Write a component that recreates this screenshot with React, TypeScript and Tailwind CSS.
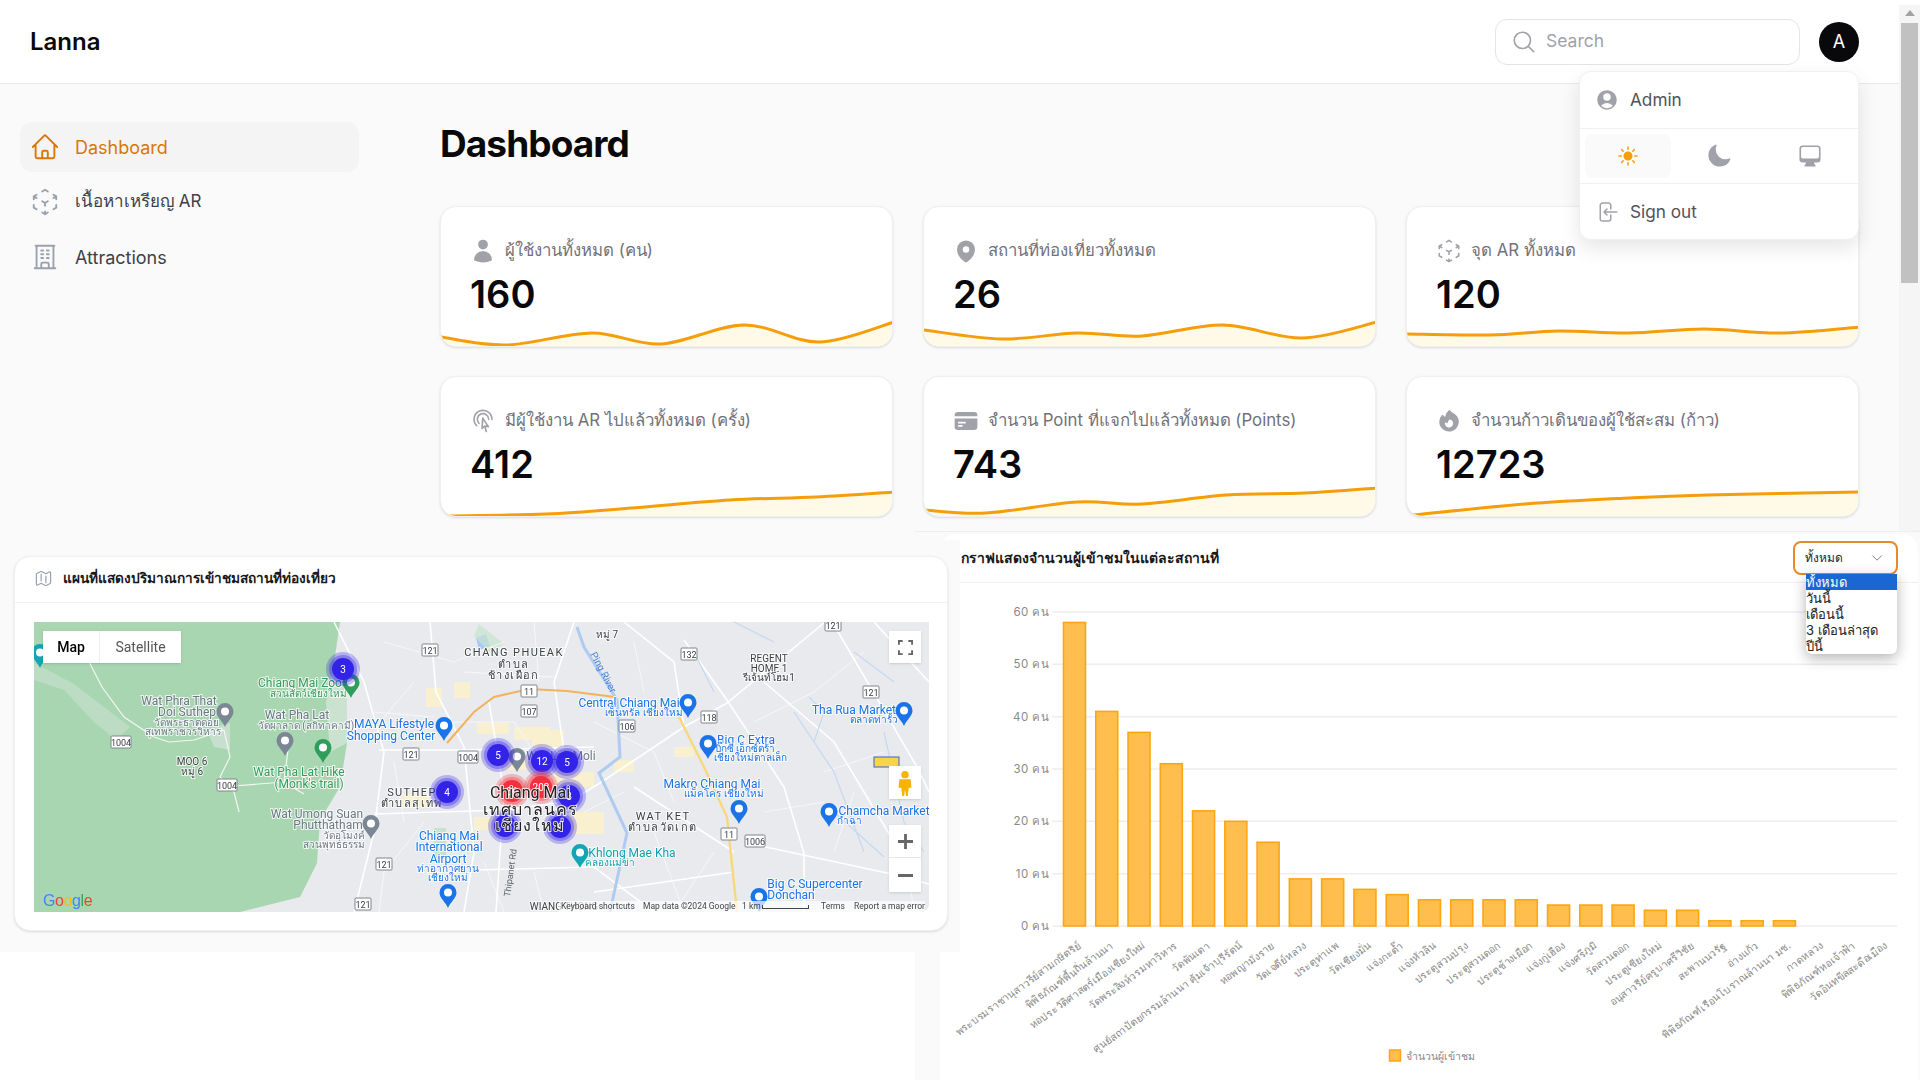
import type { ComponentType } from 'react';
import {
  HiComputerDesktop,
  HiCreditCard,
  HiFire,
  HiMapPin,
  HiMoon,
  HiOutlineArrowLeftOnRectangle,
  HiOutlineBuildingOffice,
  HiOutlineChevronDown,
  HiOutlineCubeTransparent,
  HiOutlineCursorArrowRipple,
  HiOutlineHome,
  HiOutlineMagnifyingGlass,
  HiOutlineMap,
  HiSun,
  HiUser,
  HiUserCircle,
} from 'react-icons/hi2';

type Pt = [number, number];

function smooth(pts: Pt[]) {
  let d = `M${pts[0][0]} ${pts[0][1]}`;
  for (let i = 0; i < pts.length - 1; i++) {
    const p0 = pts[Math.max(i - 1, 0)];
    const p1 = pts[i];
    const p2 = pts[i + 1];
    const p3 = pts[Math.min(i + 2, pts.length - 1)];
    const c1x = p1[0] + (p2[0] - p0[0]) / 6;
    const c1y = p1[1] + (p2[1] - p0[1]) / 6;
    const c2x = p2[0] - (p3[0] - p1[0]) / 6;
    const c2y = p2[1] - (p3[1] - p1[1]) / 6;
    d += `C${c1x} ${c1y} ${c2x} ${c2y} ${p2[0]} ${p2[1]}`;
  }
  return d;
}

const stats: { icon: ComponentType<{ className?: string }>; label: string; value: string; line: Pt[] }[] = [
  { icon: HiUser, label: 'ผู้ใช้งานทั้งหมด (คน)', value: '160', line: [[0, 130], [65, 138], [151, 126], [220, 137], [303, 118], [378, 135], [453, 115]] },
  { icon: HiMapPin, label: 'สถานที่ท่องเที่ยวทั้งหมด', value: '26', line: [[0, 123], [78, 132], [153, 126], [218, 129], [299, 118], [378, 131], [453, 115]] },
  { icon: HiOutlineCubeTransparent, label: 'จุด AR ทั้งหมด', value: '120', line: [[0, 127], [83, 128], [151, 124], [222, 126], [297, 122], [372, 126], [453, 120]] },
  { icon: HiOutlineCursorArrowRipple, label: 'มีผู้ใช้งาน AR ไปแล้วทั้งหมด (ครั้ง)', value: '412', line: [[7, 139], [105, 137], [191, 131], [289, 123], [375, 120], [453, 115]] },
  { icon: HiCreditCard, label: 'จำนวน Point ที่แจกไปแล้วทั้งหมด (Points)', value: '743', line: [[0, 133], [62, 136], [153, 125], [218, 127], [302, 118], [381, 116], [453, 111]] },
  { icon: HiFire, label: 'จำนวนก้าวเดินของผู้ใช้สะสม (ก้าว)', value: '12723', line: [[6, 138], [118, 127], [222, 121], [300, 118], [453, 115]] },
];

const places: [string, number][] = [
  ['พระบรมราชานุสาวรีย์สามกษัตริย์', 58],
  ['พิพิธภัณฑ์พื้นถิ่นล้านนา', 41],
  ['หอประวัติศาสตร์เมืองเชียงใหม่', 37],
  ['วัดพระสิงห์วรมหาวิหาร', 31],
  ['วัดพันเตา', 22],
  ['ศูนย์สถาปัตยกรรมล้านนา คุ้มเจ้าบุรีรัตน์', 20],
  ['หอพญามังราย', 16],
  ['วัดเจดีย์หลวง', 9],
  ['ประตูท่าแพ', 9],
  ['วัดเชียงมั่น', 7],
  ['แจ่งกะต๊ำ', 6],
  ['แจ่งหัวลิน', 5],
  ['ประตูสวนปรุง', 5],
  ['ประตูสวนดอก', 5],
  ['ประตูช้างเผือก', 5],
  ['แจ่งกู่เฮือง', 4],
  ['แจ่งศรีภูมิ', 4],
  ['วัดสวนดอก', 4],
  ['ประตูเชียงใหม่', 3],
  ['อนุสาวรีย์ครูบาศรีวิชัย', 3],
  ['สะพานนวรัฐ', 1],
  ['อ่างแก้ว', 1],
  ['พิพิธภัณฑ์เรือนโบราณล้านนา มช.', 1],
  ['กาดหลวง', 0],
  ['พิพิธภัณฑ์หอเจ้าฟ้า', 0],
  ['วัดอินทขีลสะดือเมือง', 0],
];

// map labels: text, x, y, colour key
const mapLabels: [string, number, number, 'gray' | 'green' | 'blue' | 'dark' | 'teal', number?][] = [
  ['Wat Phra That', 145, 83, 'gray'],
  ['Doi Suthep', 153, 94, 'gray'],
  ['วัดพระธาตุดอย', 152, 104, 'gray', 10],
  ['สุเทพราชวรวิหาร', 149, 113, 'gray', 10],
  ['MOO 6', 158, 143, 'dark', 10],
  ['หมู่ 6', 158, 153, 'dark', 10],
  ['Chiang Mai Zoo', 266, 65, 'green'],
  ['สวนสัตว์เชียงใหม่', 274, 75, 'green', 10],
  ['Wat Pha Lat', 263, 97, 'gray'],
  ['วัดผาลาด (สกิทาคามี)', 272, 107, 'gray', 10],
  ['Wat Pha Lat Hike', 265, 154, 'green'],
  ["(Monk's trail)", 275, 166, 'green'],
  ['Wat Umong Suan', 283, 196, 'gray'],
  ['Phutthatham', 294, 207, 'gray'],
  ['วัดอุโมงค์', 310, 217, 'gray', 10],
  ['สวนพุทธธรรม', 300, 226, 'gray', 10],
  ['MAYA Lifestyle', 360, 106, 'blue'],
  ['Shopping Center', 357, 118, 'blue'],
  ['SUTHEP', 378, 174, 'dark', 11],
  ['ตำบลสุเทพ', 378, 185, 'dark', 11],
  ['Chiang Mai', 415, 218, 'blue'],
  ['International', 415, 229, 'blue'],
  ['Airport', 414, 241, 'blue'],
  ['ท่าอากาศยาน', 414, 250, 'blue', 10],
  ['เชียงใหม่', 414, 259, 'blue', 10],
  ['CHANG PHUEAK', 480, 34, 'dark', 11],
  ['ตำบล', 480, 46, 'dark', 11],
  ['ช้างเผือก', 480, 57, 'dark', 11],
  ['หมู่ 7', 573, 16, 'dark', 10],
  ['REGENT', 735, 40, 'dark', 10],
  ['HOME 1', 735, 50, 'dark', 10],
  ['รีเจ้นท์โฮม1', 735, 59, 'dark', 10],
  ['Central Chiang Mai', 595, 85, 'blue'],
  ['เซ็นทรัล เชียงใหม่', 610, 94, 'blue', 10],
  ['Tha Rua Market', 820, 92, 'blue'],
  ['ตลาดท่ารั้ว', 840, 101, 'blue', 10],
  ['Big C Extra', 712, 122, 'blue'],
  ['บิ๊กซี เอ็กซ์ตร้า', 711, 130, 'blue', 10],
  ['เชียงใหม่ตาลเล็ก', 716, 139, 'blue', 10],
  ['Makro Chiang Mai', 678, 166, 'blue'],
  ['แม็คโคร เชียงใหม่', 690, 175, 'blue', 10],
  ['Chamcha Market', 850, 193, 'blue'],
  ['กำฉา', 815, 202, 'blue', 10],
  ['WAT KET', 629, 198, 'dark', 11],
  ['ตำบลวัดเกต', 629, 209, 'dark', 11],
  ['Wat Lok Moli', 527, 138, 'gray'],
  ['Khlong Mae Kha', 598, 235, 'teal'],
  ['คลองแม่ข่า', 576, 244, 'teal', 10],
  ['Big C Supercenter', 781, 266, 'blue'],
  ['Donchan', 757, 277, 'blue'],
  ['WIANG THONG', 530, 288, 'dark', 10],
];

const labelFill = {
  gray: 'fill-[#6b7785]',
  green: 'fill-[#2f9e5b]',
  blue: 'fill-[#1a73e8]',
  dark: 'fill-[#3c4043]',
  teal: 'fill-[#129eaf]',
};

const pins: [number, number, string][] = [
  [317, 76, '#2f9e5b'],
  [410, 119, '#1a73e8'],
  [191, 105, '#7b8794'],
  [251, 134, '#7b8794'],
  [289, 141, '#2f9e5b'],
  [337, 217, '#7b8794'],
  [414, 286, '#1a73e8'],
  [6, 46, '#12a5b5'],
  [654, 96, '#1a73e8'],
  [870, 104, '#1a73e8'],
  [674, 137, '#1a73e8'],
  [705, 202, '#1a73e8'],
  [795, 205, '#1a73e8'],
  [546, 246, '#12a5b5'],
  [483, 150, '#7b8794'],
  [725, 290, '#1a73e8'],
];

const shields: [number, number, string][] = [
  [87, 120, '1004'], [193, 163, '1004'], [396, 28, '121'], [377, 132, '121'], [434, 135, '1004'],
  [350, 242, '121'], [329, 282, '121'], [495, 69, '11'], [495, 89, '107'], [655, 32, '132'],
  [799, 3, '121'], [837, 70, '121'], [675, 95, '118'], [593, 104, '106'], [695, 212, '11'], [721, 219, '1006'],
];

const clusters: [number, number, string, boolean?][] = [
  [309, 47, '3'], [413, 170, '4'], [464, 133, '5'], [508, 139, '12'], [533, 140, '5'],
  [535, 174, '8'], [471, 204, '9'], [526, 205, '9'], [478, 169, '36', true], [507, 165, '203', true],
];

const roads = [
  'M543 175L566 161L650 105L693 81L790 1',
  'M650 18L693 78L750 165L770 231L770 290',
  'M803 8L883 145L895 170',
  'M713 221L853 251L895 262',
  'M300 0L330 60L350 130L340 210L320 290',
  'M396 0L402 70L430 125L440 230L430 290',
  'M345 128L430 128L560 125',
  'M340 192L470 188L545 178',
  'M455 80L470 170L462 290',
  'M440 248L560 245L620 290',
  'M590 0L640 40L650 105',
  'M600 165L700 230',
  'M840 0L895 60',
  'M540 0L520 60L530 130',
  'M730 60L800 120L860 220',
  'M560 270L700 250',
];

const sideStreets = [
  'M350 20L420 40L470 20', 'M340 90L400 95', 'M360 140L370 200', 'M390 200L350 250L345 290', 'M430 50L520 55',
  'M500 0L505 60', 'M560 100L620 130L640 180', 'M600 20L610 70', 'M620 210L650 290', 'M680 230L640 290',
  'M720 100L780 70L830 30', 'M790 150L850 130', 'M820 170L800 230', 'M870 220L880 290', 'M730 190L790 180',
  'M450 240L470 290', 'M500 250L510 290', 'M380 60L350 95', 'M415 100L480 100L500 130', 'M550 190L590 170',
];

function MapCanvas() {
  return (
    <svg viewBox="0 0 895 290" className="absolute inset-0 h-full w-full [font-family:Roboto,'Noto_Sans',sans-serif]">
      <rect width="895" height="290" fill="#e8eaed" />
      <path d="M0 0H306L300 41L313 75L313 121L306 165L286 198L283 241L266 275L206 290H0Z" fill="#a8d6b1" />
      <path d="M0 41L40 62L96 105L82 118L60 100L30 68L0 58Z" fill="#bcdcc4" />
      <path d="M173 108L196 101L196 128L180 125Z" fill="#c6e0cd" />
      <path d="M300 41L313 75L313 121L296 130L292 80Z" fill="#cbe2d1" />
      <path d="M443 101H475V112H443ZM480 105H516V118H480ZM470 135H500V148H470ZM520 150H560V165H520ZM440 195H468V208H440ZM535 190H570V212H535ZM368 172H395V186H368ZM392 66H408V85H392ZM420 60H436V76H420ZM498 108H530V125H498ZM580 138H600V150H580ZM640 125H660V135H640Z" fill="#f9f0cf" />
      <path d="M442 16L452 12L456 24L445 28Z" fill="#a8c7fa" />
      <path d="M400 206H412V236H400Z" fill="#c6e4cd" />
      <path d="M445 2L470 22L455 30L440 14Z" fill="#c6e4cd" opacity="0.7" />
      {sideStreets.map((d, i) => (
        <path key={i} d={d} fill="none" stroke="#f6f7f8" strokeWidth="1" />
      ))}
      {roads.map((d, i) => (
        <path key={i} d={d} fill="none" stroke="#ffffff" strokeWidth="1.6" />
      ))}
      <path d="M50 30L68 65L90 95L120 115L135 120L160 118L190 108L196 135L186 155L200 170L205 190M186 165L250 160L270 172M250 160L255 120" fill="none" stroke="#f4f6f4" strokeWidth="1.2" />
      <path d="M645 95L670 145L693 195L703 290" fill="none" stroke="#f9d77e" strokeWidth="2.4" />
      <path d="M413 121L440 90L460 75L495 67L533 69L581 75" fill="none" stroke="#f3b35e" strokeWidth="2" />
      <path d="M543 5L550 25L583 78L586 135L565 151L593 211L576 290" fill="none" stroke="#aecbf0" strokeWidth="3" />
      <path d="M660 30L680 70M760 90L800 150L830 230M850 110L870 200L890 230M700 0L740 20M775 75L790 90L780 120M820 30L860 60M800 190L850 235" fill="none" stroke="#c5d8f2" strokeWidth="1.2" />
      <rect x="840" y="135" width="25" height="10" fill="#f8d548" stroke="#3367d6" />
      {mapLabels.map(([text, x, y, colour, size], i) => (
        <text
          key={i}
          x={x}
          y={y}
          textAnchor="middle"
          fontSize={size ?? 12}
          letterSpacing={size === 11 ? 1.4 : 0}
          className={`${labelFill[colour]} stroke-white/80 stroke-[2px] [paint-order:stroke]`}
        >
          {text}
        </text>
      ))}
      <text x="570" y="54" fontSize="10" textAnchor="middle" transform="rotate(62 570 50)" className="fill-[#4a80d6]">Ping River</text>
      <text x="476" y="275" fontSize="9" transform="rotate(-82 476 275)" className="fill-[#5f6368]">Thipanet Rd</text>
      {shields.map(([x, y, text], i) => (
        <g key={i}>
          <rect x={x - (text.length > 3 ? 10 : 8)} y={y - 6} width={text.length > 3 ? 20 : 16} height="12" rx="1" fill="#ffffff" stroke="#80868b" />
          <text x={x} y={y + 3.5} fontSize="9" textAnchor="middle" className="fill-[#3c4043]">{text}</text>
        </g>
      ))}
      {pins.map(([x, y, colour], i) => (
        <g key={i} transform={`translate(${x - 8.5} ${y - 24})`}>
          <path d="M8.5 24C6 18 0 14 0 8.5A8.5 8.5 0 0 1 17 8.5C17 14 11 18 8.5 24Z" fill={colour} />
          <circle cx="8.5" cy="8.5" r="4" fill="#ffffff" />
        </g>
      ))}
      {clusters.map(([x, y, text, hot], i) => (
        <g key={i}>
          <circle cx={x} cy={y} r="17" fill={hot ? '#f5303c' : '#3322e8'} fillOpacity="0.28" />
          <circle cx={x} cy={y} r="14" fill={hot ? '#f5303c' : '#3322e8'} fillOpacity="0.35" />
          <circle cx={x} cy={y} r="11" fill={hot ? '#f5303c' : '#3322e8'} />
          <text x={x} y={y + 3.5} fontSize="10" textAnchor="middle" className="fill-white">{text}</text>
        </g>
      ))}
      <text x="496" y="176" fontSize="16" textAnchor="middle" className="fill-[#202124] stroke-white/80 stroke-[2px] [paint-order:stroke]">Chiang Mai</text>
      <text x="496" y="193" fontSize="16" textAnchor="middle" letterSpacing="1" className="fill-[#202124] stroke-white/80 stroke-[2px] [paint-order:stroke]">เทศบาลนคร</text>
      <text x="496" y="209" fontSize="16" textAnchor="middle" letterSpacing="1" className="fill-[#202124] stroke-white/80 stroke-[2px] [paint-order:stroke]">เชียงใหม่</text>
    </svg>
  );
}

function MapCard() {
  return (
    <div className="h-[375px] w-[934px] rounded-2xl border border-[#f0f0f0] bg-white shadow-sm">
      <div className="flex h-[46px] items-center gap-[10px] border-b border-[#f0f0f0] pb-[2px] pl-[19px]">
        <HiOutlineMap className="h-[19px] w-[19px] text-gray-400" />
        <span className="text-[13.7px] font-bold text-[#18181b]">แผนที่แสดงปริมาณการเข้าชมสถานที่ท่องเที่ยว</span>
      </div>
      <div className="relative ml-[19px] mt-[19px] h-[290px] w-[895px] overflow-hidden rounded-br-lg [font-family:Roboto,sans-serif] blur-[0.4px]">
        <MapCanvas />
        <div className="absolute left-[9px] top-[9px] flex h-[32px] bg-white text-[14px] shadow">
          <div className="flex w-[57px] items-center justify-center border-r border-[#eee] font-medium text-black">Map</div>
          <div className="flex w-[81px] items-center justify-center text-[#565656]">Satellite</div>
        </div>
        <div className="absolute right-[8px] top-[9px] flex h-[32px] w-[32px] items-center justify-center bg-white shadow">
          <svg viewBox="0 0 16 16" className="h-[15px] w-[15px] text-[#666]" fill="none" stroke="currentColor" strokeWidth="2">
            <path d="M1 5V1H5M11 1H15V5M15 11V15H11M5 15H1V11" />
          </svg>
        </div>
        <div className="absolute right-[8px] top-[144px] flex h-[33px] w-[32px] items-center justify-center bg-white shadow">
          <svg viewBox="0 0 16 28" className="h-[26px] w-[16px]">
            <circle cx="8" cy="5" r="4" fill="#f5b400" />
            <path d="M2 10H14L15 19H12L11 28H9L8 21L7 28H5L4 19H1Z" fill="#f5b400" />
          </svg>
        </div>
        <div className="absolute bottom-[20px] right-[8px] w-[32px] bg-white shadow">
          <div className="flex h-[33px] items-center justify-center border-b border-[#e6e6e6]">
            <svg viewBox="0 0 16 16" className="h-[15px] w-[15px]" fill="#666"><path d="M6.5 0H9.5V6.5H16V9.5H9.5V16H6.5V9.5H0V6.5H6.5Z" /></svg>
          </div>
          <div className="flex h-[34px] items-center justify-center">
            <svg viewBox="0 0 16 16" className="h-[15px] w-[15px]" fill="#666"><path d="M0 6.5H16V9.5H0Z" /></svg>
          </div>
        </div>
        <div className="absolute bottom-[3px] left-[9px] flex text-[16px] font-medium leading-none tracking-tight [font-family:'Liberation_Sans',sans-serif]">
          <span className="text-[#4285f4]">G</span>
          <span className="text-[#ea4335]">o</span>
          <span className="text-[#fbbc05]">o</span>
          <span className="text-[#4285f4]">g</span>
          <span className="text-[#34a853]">l</span>
          <span className="text-[#ea4335]">e</span>
        </div>
        <div className="absolute bottom-0 right-[4px] flex h-[11px] items-center bg-white/70 text-[8.5px] leading-none text-[#444]">
          <span className="ml-[2px] w-[82px]">Keyboard shortcuts</span>
          <span className="w-[99px]">Map data ©2024 Google</span>
          <span className="w-[20px]">1 km</span>
          <span className="mr-[12px] h-[4px] w-[47px] border-x border-b border-[#444]" />
          <span className="w-[33px]">Terms</span>
          <span>Report a map error</span>
        </div>
      </div>
    </div>
  );
}

function BarChart() {
  const yFor = (v: number) => 343 - v * 5.233;
  return (
    <svg viewBox="0 0 978 510" className="block h-[510px] w-[978px]">
      {[0, 10, 20, 30, 40, 50, 60].map((v) => (
        <g key={v}>
          <line x1="112" x2="957" y1={yFor(v)} y2={yFor(v)} stroke="#eeeeee" strokeWidth="1.5" />
          <text x="109" y={yFor(v) + 4} fontSize="11.5" textAnchor="end" letterSpacing="0.4" className="fill-[#8a8a8a]">{v} คน</text>
        </g>
      ))}
      {places.map(([name, v], i) => {
        const x = 123.5 + i * 32.27;
        return (
          <g key={name}>
            {v > 0 && (
              <rect x={x} y={yFor(v)} width="22" height={v * 5.233} fill="#ffbe4d" stroke="#ffa514" strokeWidth="1.6" />
            )}
            <text
              x="0"
              y="0"
              fontSize="10.4"
              textAnchor="end"
              transform={`translate(${x + 18} 364) rotate(-36)`}
              className="fill-[#8a8a8a]"
            >
              {name}
            </text>
          </g>
        );
      })}
      <rect x="449.5" y="467" width="11" height="11" fill="#ffbe4d" stroke="#ffa514" strokeWidth="1.5" />
      <text x="466" y="477" fontSize="10.5" className="fill-[#8a8a8a]">จำนวนผู้เข้าชม</text>
    </svg>
  );
}

function ChartCard() {
  return (
    <div className="relative h-[600px] rounded-t-2xl bg-white">
      <div className="flex h-[49px] items-center justify-between border-b border-[#f0f0f0] pl-[21px] pr-[20px]">
        <span className="mb-[2px] text-[14px] font-bold text-[#18181b]">กราฟแสดงจำนวนผู้เข้าชมในแต่ละสถานที่</span>
        <div className="flex h-[34px] w-[105px] items-center justify-between rounded-lg border-2 border-[#e58a2b] pl-[10px] pr-[12px] text-[12px] font-medium text-[#27272a]">
          ทั้งหมด
          <HiOutlineChevronDown className="h-[14px] w-[14px] text-gray-500" />
        </div>
      </div>
      <BarChart />
      <div className="absolute right-[21px] top-[40px] z-10 w-[91px] overflow-hidden rounded-b-md bg-white text-[13px] leading-[16px] text-[#222] shadow-[0_4px_14px_rgba(0,0,0,0.3)]">
        <div className="h-[16px] bg-[#1a66d2] font-medium text-white">ทั้งหมด</div>
        <div className="h-[16px]">วันนี้</div>
        <div className="h-[16px]">เดือนนี้</div>
        <div className="h-[16px]">3 เดือนล่าสุด</div>
        <div className="h-[16px]">ปีนี้</div>
      </div>
    </div>
  );
}

function Sidebar() {
  return (
    <aside className="w-[380px] shrink-0 pl-[20px] pt-[38px]">
      <div className="flex w-[339px] flex-col gap-[5px] text-[18px] text-[#3f3f46]">
        <div className="flex h-[50px] items-center gap-[15px] rounded-xl bg-[#f4f4f5] px-[10px] text-[#d97706]">
          <HiOutlineHome className="h-[30px] w-[30px]" />
          Dashboard
        </div>
        <div className="flex h-[50px] items-center gap-[15px] px-[10px] text-[17px]">
          <HiOutlineCubeTransparent className="h-[30px] w-[30px] text-gray-400" />
          เนื้อหาเหรียญ AR
        </div>
        <div className="flex h-[50px] items-center gap-[15px] px-[10px]">
          <HiOutlineBuildingOffice className="h-[30px] w-[30px] text-gray-400" />
          Attractions
        </div>
      </div>
    </aside>
  );
}

function StatCard({ stat }: { stat: (typeof stats)[number] }) {
  const Icon = stat.icon;
  const first = stat.line[0];
  const last = stat.line[stat.line.length - 1];
  const line = smooth(stat.line);
  return (
    <div className="relative h-[141px] overflow-hidden rounded-2xl border border-[#f0f0f0] bg-white pl-[29px] pt-[30px] shadow-sm">
      <svg viewBox="0 0 453 141" className="absolute left-0 top-0 h-[141px] w-[453px]">
        <path d={`${line}L${last[0]} 141L${first[0]} 141Z`} fill="#fff9e8" />
        <path d={line} fill="none" stroke="#f59e0b" strokeWidth="3" />
      </svg>
      <div className="relative flex h-[28px] items-center gap-[9px] text-[16.8px] text-[#71717a]">
        <Icon className="h-[26px] w-[26px] shrink-0 text-[#a1a1aa]" />
        {stat.label}
      </div>
      <div className="relative mt-[9px] text-[38px] font-semibold leading-[40px] text-[#09090b]">{stat.value}</div>
    </div>
  );
}

function UserMenu() {
  return (
    <div className="absolute right-[61px] top-[71px] z-30 w-[280px] rounded-xl border border-[#f0f0f0] bg-white text-[17.2px] text-[#52525b] shadow-[0_8px_20px_rgba(0,0,0,0.1)]">
      <div className="flex h-[57px] items-center gap-[11px] border-b border-[#f0f0f0] pl-[15px]">
        <HiUserCircle className="h-[24px] w-[24px] text-[#a1a1aa]" />
        Admin
      </div>
      <div className="grid h-[55px] grid-cols-3 gap-[5px] border-b border-[#f0f0f0] p-[5px]">
        <div className="flex items-center justify-center rounded-lg bg-[#fafafa]">
          <HiSun className="h-[24px] w-[24px] text-[#f59e0b]" />
        </div>
        <div className="flex items-center justify-center">
          <HiMoon className="h-[26px] w-[26px] text-[#a1a1aa]" />
        </div>
        <div className="flex items-center justify-center">
          <HiComputerDesktop className="h-[26px] w-[26px] text-[#a1a1aa]" />
        </div>
      </div>
      <div className="flex h-[55px] items-center gap-[11px] pl-[15px]">
        <HiOutlineArrowLeftOnRectangle className="h-[24px] w-[24px] text-[#a1a1aa]" />
        Sign out
      </div>
    </div>
  );
}

export default function App() {
  return (
    <div className="relative h-screen overflow-hidden bg-white [font-family:Inter,'Noto_Sans',sans-serif]">
      <header className="flex h-[84px] items-center justify-between border-b border-[#e8e8e8] bg-white pl-[30px] pr-[61px]">
        <div className="text-[24px] font-semibold text-[#09090b]">Lanna</div>
        <div className="flex items-center gap-[19px]">
          <div className="flex h-[46px] w-[305px] items-center gap-[9px] rounded-xl border border-[#e4e4e7] pl-[15px] text-[17.5px] text-[#a1a1aa]">
            <HiOutlineMagnifyingGlass className="h-[26px] w-[26px]" />
            Search
          </div>
          <div className="flex h-[40px] w-[40px] items-center justify-center rounded-full bg-[#09090b] text-[18px] text-white">A</div>
        </div>
      </header>
      <UserMenu />

      <div className="flex h-[456px] bg-[#fafafa]">
        <Sidebar />
        <main className="flex-1 pl-[60px] pr-[61px] pt-[40px]">
          <h1 className="text-[37px] font-bold leading-[40px] tracking-tight text-[#09090b]">Dashboard</h1>
          <div className="mt-[42px] grid grid-cols-3 gap-x-[30px] gap-y-[29px]">
            {stats.map((s) => (
              <StatCard key={s.label} stat={s} />
            ))}
          </div>
        </main>
      </div>

      <div className="flex items-start">
        <div className="relative z-10 h-[412px] w-[960px] shrink-0 bg-[#fafafa] pl-[14px] pt-[16px]">
          <MapCard />
        </div>
        <div className="relative z-0 -ml-[45px] -mt-[9px] flex-1 border-t border-[#eeeeee] bg-[#fafafa] pb-[40px] pl-[25px] pr-[2px] pt-[2px]">
          <ChartCard />
        </div>
      </div>

      {/* page scrollbar */}
      <div className="absolute right-0 top-[5px] z-20 h-[526px] w-[21px] bg-[#f5f5f5]">
        <div className="mx-auto mt-[5px] h-0 w-0 border-x-[5px] border-b-[6px] border-x-transparent border-b-[#a3a3a3]" />
        <div className="ml-[2px] mt-[7px] h-[260px] w-[17px] bg-[#c1c1c1]" />
      </div>
    </div>
  );
}
